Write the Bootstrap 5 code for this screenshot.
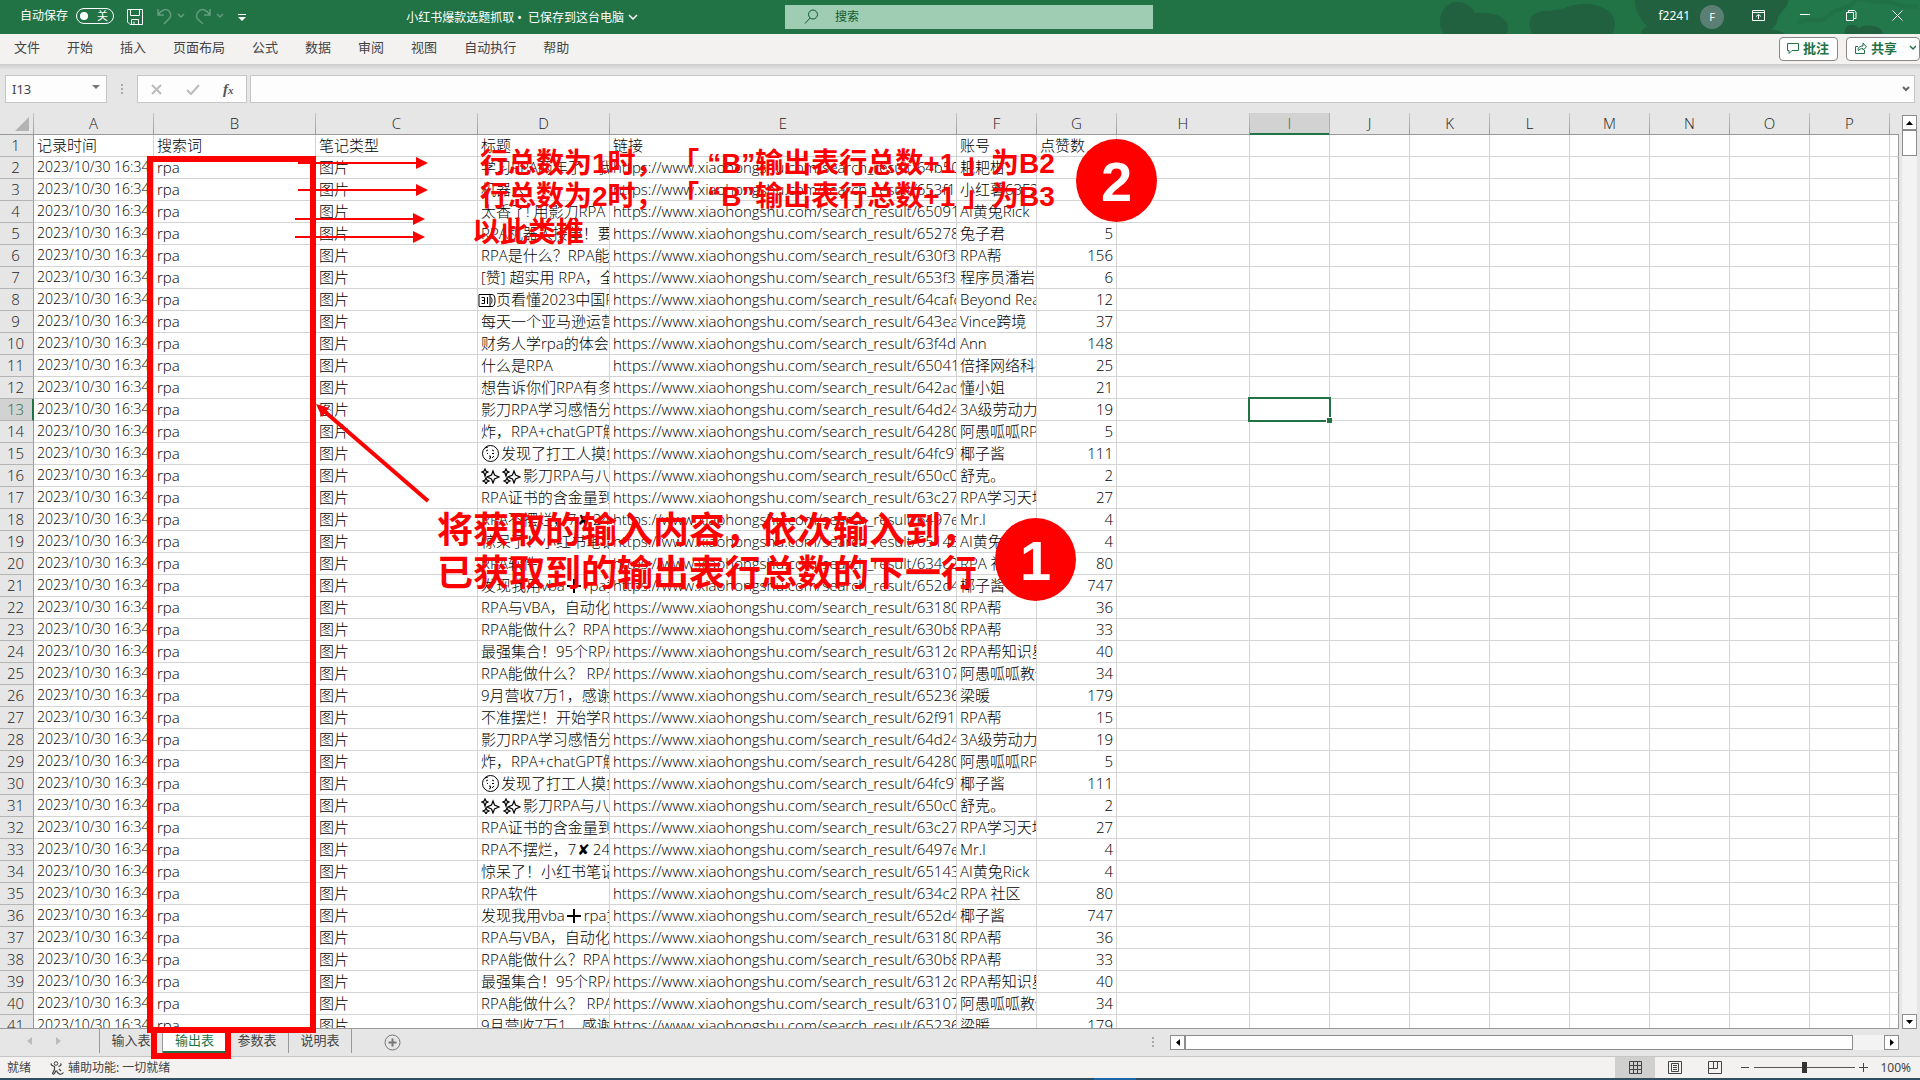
<!DOCTYPE html>
<html lang="zh-CN">
<head>
<meta charset="utf-8">
<meta name="viewport" content="width=device-width, initial-scale=1">
<title>小红书爆款选题抓取</title>
<link rel="stylesheet" href="https://cdn.jsdelivr.net/npm/bootstrap@5.3.0/dist/css/bootstrap.min.css">
<style>
  :root { --xl: #217346; --chrome: #e6e6e6; --line: #d4d4d4; --edge: #999; }
  body { height: 100vh; overflow: hidden; background: var(--chrome); color: #444;
    font: 400 13px/20px "Noto Sans", "Noto Sans CJK SC", sans-serif; }
  button, input { font: inherit; color: inherit; }
  .plain { background: none; border: 0; padding: 0; line-height: 1; }
  svg { display: block; flex: none; }
  .ico { fill: none; stroke: currentColor; stroke-width: 1; }

  /* title bar */
  .titlebar { height: 34px; background: var(--xl); color: #fff; font-size: 12px; padding-bottom: 3px; }
  .titlebar > * { z-index: 1; }
  .titlebar .deco { position: absolute; right: 0; top: 0; z-index: 0; }
  .t-side { flex: 1 1 0; min-width: 0; }
  .pill { width: 38px; height: 16px; border: 1px solid #fff; border-radius: 8px; padding: 0 5px 0 3px; font-size: 11px; line-height: 14px; }
  .pill input { appearance: none; width: 8px; height: 8px; border-radius: 50%; background: #fff; margin: 0; }
  .dim { opacity: .3; }
  .searchbox { width: 368px; height: 24px; background: #9fcdb3; color: #0e5c2f; padding-left: 19px; margin: 2px 0 0 15px; }
  .searchbox input { background: none; border: 0; outline: 0; padding: 0; }
  .searchbox input::placeholder { color: #0e5c2f; opacity: 1; }
  .avatar { width: 24px; height: 24px; border-radius: 50%; background: #5b7f74; font-size: 11px; }

  /* ribbon tabs */
  .ribbon { height: 30px; background: #f3f2f1; padding-left: 14px; }
  .ribbon nav { gap: 27px; }
  .ribbon a, .sheets a { color: #444; text-decoration: none; }
  .rbtn { height: 24px; background: #fff; border: 1px solid #8a8886; border-radius: 4px; color: var(--xl); font-weight: 700; padding: 0 8px 2px 7px; }
  .fbar { height: 49px; padding: 11px 5px 10px; background: linear-gradient(#cdcdcd, var(--chrome) 6px); }
  .fbox { height: 28px; background: #fdfdfd; border: 1px solid #c6c6c6; }
  .fbox input { background: none; border: 0; outline: 0; padding: 0 0 0 6px; min-width: 0; }

  /* grid */
  .sheet { min-height: 0; }
  .gridwrap { min-width: 0; overflow: hidden; border-bottom: 1px solid var(--edge); }
  .cells { table-layout: fixed; width: 100%; border-collapse: separate; border-spacing: 0;
    font: 300 15px/20px "Open Sans", "Noto Sans CJK SC", sans-serif; color: #000; }
  .cells th { font-weight: 300; text-align: center; background: var(--chrome); padding: 0; color: #222; }
  .cells thead th { height: 22px; line-height: 21px; border-bottom: 1px solid var(--edge);
    border-right: 1px solid; border-image: linear-gradient(#c8c8c8, #999) 1; border-width: 0 1px 1px 0; }
  .cells thead th:last-child { border-right-width: 0; }
  .cells thead th.on { background: #d2d2d2; color: var(--xl); box-shadow: inset 0 -1px var(--xl); border-image: none; border-color: transparent #b0b0b0 var(--xl) transparent; }
  .cells tbody th { height: 22px; line-height: 20px; vertical-align: top; border-right: 1px solid var(--edge); border-bottom: 1px solid #b4b4b4; padding-right: 2px; }
  .cells tbody th.on { background: #d2d2d2; color: var(--xl); border-right: 2px solid var(--xl); padding-right: 1px; }
  .cells td { height: 22px; line-height: 20px; vertical-align: top; background: #fff; padding: 0 3px; border-right: 1px solid var(--line); border-bottom: 1px solid var(--line);
    white-space: nowrap; overflow: hidden; }
  .cells tr:not(:first-child) td:nth-child(2) { font-size: 14px; }
  .cells tr:not(:first-child) td:nth-child(8) { text-align: right; }
  .cells td:last-child { border-right-color: var(--edge); }
  .cells td.sel { position: relative; overflow: visible; }
  .cells td.sel::before { content: ""; position: absolute; inset: -2px; border: 2px solid var(--xl); }
  .cells td.sel::after { content: ""; position: absolute; right: -3px; bottom: -3px; width: 6px; height: 6px; background: var(--xl); border: 1px solid #fff; border-width: 1px 0 0 1px; }
  .cells td svg { display: inline-block; vertical-align: -3px; }
  .sym { font-family: "DejaVu Sans", sans-serif; font-weight: 400; margin: 0 3px 0 1px; line-height: 1; }
  .vbar { width: 21px; padding: 2px 3px 0; }
  .sb { background: #fff; border: 1px solid #8c8c8c; display: flex; align-items: center; justify-content: center; padding: 0; }
  .track { background: #f3f3f3; }
  .hthumb { width: calc(100% - 31px); height: 15px; }

  /* sheet tabs and status bar */
  .sheets { height: 28px; border-bottom: 1px solid #c6c6c6; }
  .sheets a { width: 63px; border-right: 1px solid var(--edge); text-align: center; height: 24px; line-height: 23px; }
  .sheets a.active { background: #fff; color: var(--xl); border-bottom: 2px solid var(--xl); border-right: 0; }
  .tabnav { width: 100px; height: 24px; padding-left: 27px; gap: 24px; border-right: 1px solid var(--edge); }
  .hbar { width: 40.5%; padding-right: 21px; }
  .status { height: 21px; background: #f3f2f1; font-size: 12px; padding-left: 7px; }
  .vbtn { width: 40px; height: 21px; display: flex; align-items: center; justify-content: center; }
  .vbtn.active { background: #d0d0ce; }
  .zoom { appearance: none; width: 101px; height: 12px; background: linear-gradient(#555, #555) center / 100% 1px no-repeat; margin: 0; }
  .zoom::-webkit-slider-thumb { appearance: none; width: 5px; height: 11px; background: #333; }
  .strip { height: 2px; background: #2f4f60; }
  .strip i { position: absolute; left: 57%; width: 42px; height: 2px; background: #1a66a6; }

  /* markup over the sheet */
  .notes { position: absolute; left: 0; top: 0; width: 1920px; height: 1080px; pointer-events: none; color: #f00; z-index: 5;
    font-family: "Liberation Sans", "Noto Sans CJK SC", sans-serif; font-weight: 700; }
  .notes > * { position: absolute; white-space: pre; }
  .n-a { left: 480px; top: 147px; font-size: 28px; line-height: 33px; }
  .n-b { left: 472px; top: 216px; font-size: 28px; line-height: 33px; }
  .n-c { left: 437px; top: 509px; font-size: 36px; line-height: 43px; }
  .ball { width: 81px; height: 83px; border-radius: 50%; background: #f00; color: #fff; font-size: 56px; line-height: 85px; text-align: center; }
  .ball.two { left: 1076px; top: 139px; }
  .ball.one { left: 995px; top: 518px; }
</style>
</head>
<body class="d-flex flex-column position-relative">

<header class="titlebar d-flex align-items-center position-relative flex-shrink-0">
  <svg class="deco" width="640" height="34" viewBox="0 0 640 34"><g fill="#21613f">
    <path d="M160 22c0-12 8-20 17-20 12 0 16 8 18 11 14-1 32 2 33 14 0 3 0 5-2 7h-62c-3-4-4-8-4-12z"/><path d="M250 28c-2-12 4-16 14-17 20 0 25-7 40-7 18 0 31 8 31 19 0 5-1 8-3 11h-80z"/>
    <path d="M355 0h154c-2 10-12 12-12 22-2 8-10 8-15 12H362c-2-4 2-5 5-8-8-7-12-17-12-26z"/></g>
    <path d="M509 0h131v34h-38c0-8-16-10-23-6-7-5-15-3-14 6h-83c6-5 13-4 15-12 2-10 10-12 12-22z" fill="#22784a"/><path d="M518 24c8-10 20 2 30-8s22-6 26-14 20 2 28 0 24 8 36 4" fill="none" stroke="#206d42" stroke-width="4" opacity=".6"/><path fill="#21613f" d="M565 34c-1-10 8-11 14-6 8-5 24-2 24 6zM475 34c8-6 22-6 30 0z"/></svg>
  <div class="t-side d-flex align-items-center position-relative" style="padding-left:20px">
    <label for="autosave">自动保存</label>
    <span class="pill d-flex align-items-center justify-content-between" style="margin-left:8px"><input type="checkbox" role="switch" id="autosave"><span>关</span></span>
    <button class="plain" aria-label="保存" style="margin:3px 0 0 13px"><svg class="ico" width="17" height="17" viewBox="0 0 17 17"><path d="M.5.5h15v15H3L.5 13zM3.500.500v6h9v-6M4.500 15.500v-5h7v5M7 15.500v-3"/></svg></button>
    <button class="plain dim" aria-label="撤消" style="margin:2px 0 0 13px"><svg class="ico" width="28" height="17" viewBox="0 0 28 17"><path stroke-width="1.500" d="M1 1v6h6M1 7C4 2 9 0 12 3c5 6-2 9-5 13M21 6l3 3 3-3"/></svg></button>
    <button class="plain dim" aria-label="恢复" style="margin:2px 0 0 10px"><svg class="ico" width="29" height="17" viewBox="0 0 29 17"><path stroke-width="1.500" d="M15 1v6H9M15 7C12 2 7 0 4 3c-6 6 0 9 4 13M22 6l3 3 3-3"/></svg></button>
    <button class="plain" aria-label="自定义快速访问工具栏" style="margin:3px 0 0 14px"><svg width="8" height="7" viewBox="0 0 8 7" fill="#fff"><path d="M0 0h8v1H0zM0 3h8L4 7z"/></svg></button>
    <div class="ms-auto d-flex align-items-center pt-1" style="margin-right:132px"><span>小红书爆款选题抓取&nbsp;•&nbsp;&nbsp;已保存到这台电脑</span><svg class="ico ms-1" width="10" height="7" viewBox="0 0 10 7"><path stroke-width="1.500" d="M1 1l4 4 4-4"/></svg></div>
  </div>
  <div class="searchbox d-flex align-items-center position-relative flex-shrink-0">
    <svg class="ico" width="15" height="15" viewBox="0 0 15 15"><circle cx="9" cy="5.500" r="4.500"/><path d="M6 9l-5 5.500"/></svg>
    <input class="ms-3" type="search" placeholder="搜索" aria-label="搜索">
  </div>
  <div class="t-side d-flex align-items-center justify-content-end position-relative" style="padding-right:17px">
    <span>f2241</span>
    <span class="avatar d-flex align-items-center justify-content-center" style="margin:3px 28px 0 10px">F</span>
    <button class="plain" aria-label="功能区显示选项"><svg class="ico" width="13" height="11" viewBox="0 0 13 11"><path d="M.5.500h12v10H.5zM.5 2.500h12M6.500 9V4.500M4 6.500l2.500-2 2.500 2"/></svg></button>
    <button class="plain" aria-label="最小化" style="margin-left:35px"><svg class="ico" width="10" height="11" viewBox="0 0 10 11"><path d="M0 4.500h10"/></svg></button>
    <button class="plain" aria-label="还原" style="margin-left:36px"><svg class="ico" width="11" height="11" viewBox="0 0 11 11"><path d="M.5 2.500h7v8h-7zM2.500 2.500v-2h6l1.500 1.500v6.500H8"/></svg></button>
    <button class="plain" aria-label="关闭" style="margin-left:35px"><svg class="ico" width="11" height="11" viewBox="0 0 11 11"><path d="M.5.500l10 10M10.500.500l-10 10"/></svg></button>
  </div>
</header>

<div class="ribbon d-flex align-items-center flex-shrink-0">
  <nav class="d-flex pb-1">
    <a href="#">文件</a><a href="#">开始</a><a href="#">插入</a><a href="#">页面布局</a><a href="#">公式</a><a href="#">数据</a><a href="#">审阅</a><a href="#">视图</a><a href="#">自动执行</a><a href="#">帮助</a>
  </nav>
  <div class="ms-auto d-flex gap-2">
    <button class="rbtn d-flex align-items-center gap-1"><svg class="ico" width="12" height="11" viewBox="0 0 12 11"><path d="M.5.500h11v7H5l-3 3v-3H.5z"/></svg>批注</button>
    <button class="rbtn d-flex align-items-center gap-1" style="padding-right:3px"><svg class="ico" width="13" height="12" viewBox="0 0 13 12"><path d="M4 4.500H1.500v7h9V8M4 8c0-3 2-4 5-4V1l3.500 4L9 8V6.500C7 6.500 5 7 4 9"/></svg>共享<svg class="ico ms-2" width="7" height="6" viewBox="0 0 7 6"><path stroke-width="1.500" d="M1 1l3 3 3-3"/></svg></button>
  </div>
</div>

<div class="fbar d-flex flex-shrink-0">
  <div class="fbox d-flex align-items-center" style="width:102px"><input class="flex-fill" value="I13" aria-label="名称框"><svg class="mb-1" style="margin-right:6px" width="8" height="4" viewBox="0 0 8 4" fill="#777"><path d="M0 0h8L4 4z"/></svg></div>
  <svg class="align-self-center" style="margin:0 13px 0 14px" width="3" height="11" viewBox="0 0 3 11" fill="#aaa"><path d="M0 0h2v2H0zM0 4h2v2H0zM0 8h2v2H0z"/></svg>
  <div class="fbox d-flex align-items-center" style="width:110px;padding-left:13px">
    <button class="plain" aria-label="取消"><svg class="ico" width="11" height="11" viewBox="0 0 11 11" style="color:#bbb"><path stroke-width="2" d="M1 1l9 9M10 1l-9 9"/></svg></button>
    <button class="plain" aria-label="输入" style="margin:0 23px 0 24px"><svg class="ico" width="14" height="11" viewBox="0 0 14 11" style="color:#bbb"><path stroke-width="2" d="M1 6l4 4 8-9"/></svg></button>
    <button class="plain" aria-label="插入函数" style="font:italic 700 15px/18px 'Liberation Serif',serif;color:#555"><i>f</i><i style="font-size:11px">x</i></button>
  </div>
  <div class="fbox d-flex align-items-center flex-fill" style="margin-left:3px"><input class="flex-fill" aria-label="编辑栏"><svg class="ico me-1" width="8" height="6" viewBox="0 0 8 6" style="color:#666"><path stroke-width="2" d="M1 1l3 3 3-3"/></svg></div>
</div>

<main class="sheet d-flex flex-fill">
  <div class="gridwrap flex-fill">
    <table class="cells">
      <colgroup id="cols"></colgroup>
      <thead><tr id="letters"></tr></thead>
      <tbody id="rows"></tbody>
    </table>
  </div>
  <div class="vbar d-flex flex-column flex-shrink-0">
    <button class="sb" style="height:15px" aria-label="向上"><svg width="7" height="4" viewBox="0 0 7 4"><path d="M0 4h7L3.500 0z"/></svg></button>
    <div class="track flex-fill"><div class="sb" style="height:26px"></div></div>
    <button class="sb" style="height:15px" aria-label="向下"><svg width="7" height="4" viewBox="0 0 7 4"><path d="M0 0h7L3.500 4z"/></svg></button>
  </div>
</main>

<div class="sheets d-flex flex-shrink-0">
  <div class="tabnav d-flex align-items-center"><svg width="5" height="8" viewBox="0 0 5 8" fill="#bbb"><path d="M5 0v8L0 4z"/></svg><svg width="5" height="8" viewBox="0 0 5 8" fill="#bbb"><path d="M0 0v8l5-4z"/></svg></div>
  <a href="#">输入表</a><a href="#" class="active">输出表</a><a href="#">参数表</a><a href="#">说明表</a>
  <button class="plain" aria-label="新工作表" style="margin-left:32px"><svg class="ico" width="17" height="17" viewBox="0 0 17 17" style="color:#777"><circle cx="8.500" cy="8.500" r="7.500"/><path stroke-width="2" d="M8.500 4.500v8M4.500 8.500h8"/></svg></button>
  <div class="hbar ms-auto d-flex align-items-center flex-shrink-0">
    <svg style="margin:0 15px 0 10px" width="3" height="11" viewBox="0 0 3 11" fill="#aaa"><path d="M0 0h2v2H0zM0 4h2v2H0zM0 8h2v2H0z"/></svg>
    <button class="sb" style="width:15px;height:15px" aria-label="向左"><svg width="4" height="7" viewBox="0 0 4 7"><path d="M4 0v7L0 3.500z"/></svg></button>
    <div class="track flex-fill"><div class="sb hthumb"></div></div>
    <button class="sb" style="width:15px;height:15px" aria-label="向右"><svg width="4" height="7" viewBox="0 0 4 7"><path d="M0 0v7l4-3.500z"/></svg></button>
  </div>
</div>

<footer class="status d-flex align-items-center flex-shrink-0">
  <span>就绪</span>
  <svg class="ico" style="margin:0 3px 0 19px" width="15" height="14" viewBox="0 0 15 14"><circle cx="6" cy="2.500" r="1.800"/><path d="M1.500 2.500c-1 1 0 2 3 3v3l-2 4c1 1.500 2 .5 3.500-3M8.500 5.500c3-1 3-2 2-3M6.500 9.500c1 4 5 5 7 2M9 8l2 2" stroke-width="1.200"/></svg>
  <span>辅助功能: 一切就绪</span>
  <div class="ms-auto d-flex align-items-center" style="padding-right:9px">
    <button class="plain vbtn active" aria-label="普通"><svg class="ico" width="13" height="13" viewBox="0 0 13 13"><path d="M.5.500h12v12H.5zM.5 4.500h12M.5 8.500h12M4.500.500v12M8.500.500v12"/></svg></button>
    <button class="plain vbtn" aria-label="页面布局"><svg class="ico" width="14" height="13" viewBox="0 0 14 13"><path d="M.5.500h13v12H.5zM3.500 2.500h7v8h-7zM5 4.500h4M5 6.500h4M5 8.500h4"/></svg></button>
    <button class="plain vbtn" aria-label="分页预览"><svg class="ico" width="14" height="13" viewBox="0 0 14 13"><path d="M.5.500h13v12H.5zM.5 7.500h9v-7M5.500.500v7"/></svg></button>
    <button class="plain" aria-label="缩小" style="margin:0 5px 0 6px"><svg class="ico" width="8" height="9" viewBox="0 0 8 9"><path d="M0 4.500h8"/></svg></button>
    <input class="zoom" type="range" min="0" max="100" value="50" aria-label="显示比例">
    <button class="plain" aria-label="放大" style="margin:0 12px 0 4px"><svg class="ico" width="9" height="9" viewBox="0 0 9 9"><path d="M0 4.500h9M4.500 0v9"/></svg></button>
    <span>100%</span>
  </div>
</footer>
<div class="strip flex-shrink-0 position-relative"><i></i></div>

<div class="notes">
  <svg width="1920" height="1080" viewBox="0 0 1920 1080" fill="none" stroke="#f00">
    <path stroke-width="6" d="M150 159H313V1030H150zM154 1030H228V1056H154z"/>
    <path stroke-width="2" d="M298 163H418M298 190H418M295 219H415M295 237H415"/>
    <path stroke-width="4" d="M428 501L324 411"/>
    <path fill="#f00" stroke="none" d="M416 157l12 6-12 6zM416 184l12 6-12 6zM413 213l12 6-12 6zM413 231l12 6-12 6zM316 404l13 4-7 9z"/>
  </svg>
  <div class="n-a">行总数为1时， 「 “B”输出表行总数+1 」为B2
行总数为2时， 「 “B”输出表行总数+1 」为B3</div>
  <div class="n-b">以此类推</div>
  <div class="n-c">将获取的输入内容，依次输入到，
已获取到的输出表行总数的下一行</div>
  <div class="ball two">2</div>
  <div class="ball one">1</div>
</div>

<script>
  const KEYCAP = '<svg width="18" height="15" viewBox="0 0 18 15" fill="none" stroke="#000" style="margin-left:-3px"><path d="M1 1.500h11v12H1zM6 1.500h8q3 0 3 6t-3 6H6M3.500 4.500h3v6h-3M4 7.500h2M9.500 4v7M12.500 4c2 1 2 6 0 7"/></svg>';
  const KISS = '<svg width="20" height="17" viewBox="0 0 20 17" fill="none" stroke="#000"><circle cx="9.500" cy="8.500" r="8"/><path d="M5 6l2-1M11 5l2 1M6 8.500h1M11 8.500h2M8 11q3 0 1 1 2 1-1 2M13 11l-2 2M4 3l3-1"/></svg>';
  const SPARK = '<svg width="21" height="16" viewBox="0 0 21 16" stroke="#000" stroke-width="1.200" fill="none"><path d="M12 3l1.500 4L18 9l-4.500 2L12 15l-1.500-4L6 9l4.500-2zM4 1l1 2 2 1-2 1-1 3-1-3-2-1 2-1zM5 10l1 2 2 1-2 1-1 2-1-2-2-1 2-1z"/></svg>';
  const cross = '<span class="sym">✘</span>';
  const plus = '<svg width="19" height="15" viewBox="0 0 19 15" stroke="#000" stroke-width="2"><path d="M2 7h14M9 0v14"/></svg>';
  const cycle = [
    ['影刀RPA学习感悟分享', '64d24', '3A级劳动力', 19],
    ['炸，RPA+chatGPT解', '64280', '阿愚呱呱RPA', 5],
    [KISS + '发现了打工人摸鱼', '64fc97', '椰子酱', 111],
    [SPARK + SPARK + '影刀RPA与八爪', '650c0', '舒克。', 2],
    ['RPA证书的含金量到底', '63c27', 'RPA学习天地', 27],
    ['RPA不摆烂，7' + cross + '24', '6497e', 'Mr.l', 4],
    ['惊呆了！小红书笔记', '65143', 'AI黄兔Rick', 4],
    ['RPA软件', '634c2', 'RPA 社区', 80],
    ['发现我用vba' + plus + 'rpa竟', '652d4', '椰子酱', 747],
    ['RPA与VBA，自动化', '63180', 'RPA帮', 36],
    ['RPA能做什么？RPA', '630b8', 'RPA帮', 33],
    ['最强集合！95个RPA', '6312d', 'RPA帮知识星', 40],
    ['RPA能做什么？ RPA', '63107', '阿愚呱呱教你', 34],
    ['9月营收7万1，感谢支', '65236', '梁暖', 179]
  ];
  const notes = [
    ['学习RPA两年了，我', '64b50', '耙耙柑', ''],
    ['机器人', '653f1c', '小红薯63F2', ''],
    ['太香了! 用影刀RPA', '65091', 'AI黄兔Rick', ''],
    ['RPA机器人接单！要', '65278', '兔子君', 5],
    ['RPA是什么？RPA能', '630f36', 'RPA帮', 156],
    ['[赞] 超实用 RPA，全', '653f37', '程序员潘岩', 6],
    [KEYCAP + '页看懂2023中国R', '64cafc', 'Beyond Rea', 12],
    ['每天一个亚马逊运营', '643ea', 'Vince跨境', 37],
    ['财务人学rpa的体会', '63f4d', 'Ann', 148],
    ['什么是RPA', '65041', '倍择网络科技', 25],
    ['想告诉你们RPA有多', '642ac', '懂小姐', 21],
    ...cycle, ['不准摆烂！开始学R', '62f918', 'RPA帮', 15], ...cycle
  ];
  const widths = [34, 120, 162, 162, 132, 347, 80, 80, 133, 80, 80, 80, 80, 80, 80, 80, 80];
  document.getElementById('cols').innerHTML = widths.map(w => `<col style="width:${w}px">`).join('') + '<col>';
  document.getElementById('letters').innerHTML =
    '<th><svg class="ms-auto me-1" width="14" height="14" viewBox="0 0 14 14"><path d="M14 0v14H0z" fill="#b3b3b3"/></svg></th>' +
    [...'ABCDEFGHIJKLMNOP'].map(l => `<th scope="col"${l === 'I' ? ' class="on"' : ''}>${l}</th>`).join('') + '<th></th>';
  const row = (n, c) => `<tr><th scope="row"${n === 13 ? ' class="on"' : ''}>${n}</th>` + c.map(t => `<td>${t}</td>`).join('') +
    [...'HIJKLMNOPQ'].map(l => `<td${n === 13 && l === 'I' ? ' class="sel"' : ''}></td>`).join('') + '</tr>';
  document.getElementById('rows').innerHTML = row(1, ['记录时间', '搜索词', '笔记类型', '标题', '链接', '账号', '点赞数']) +
    notes.map(([title, id, who, likes], i) => row(i + 2, ['2023/10/30 16:34', 'rpa', '图片', title, 'https://www.xiaohongshu.com/search_result/' + id, who, likes])).join('');
</script>
<script src="https://cdn.jsdelivr.net/npm/bootstrap@5.3.0/dist/js/bootstrap.bundle.min.js"></script>
</body>
</html>
